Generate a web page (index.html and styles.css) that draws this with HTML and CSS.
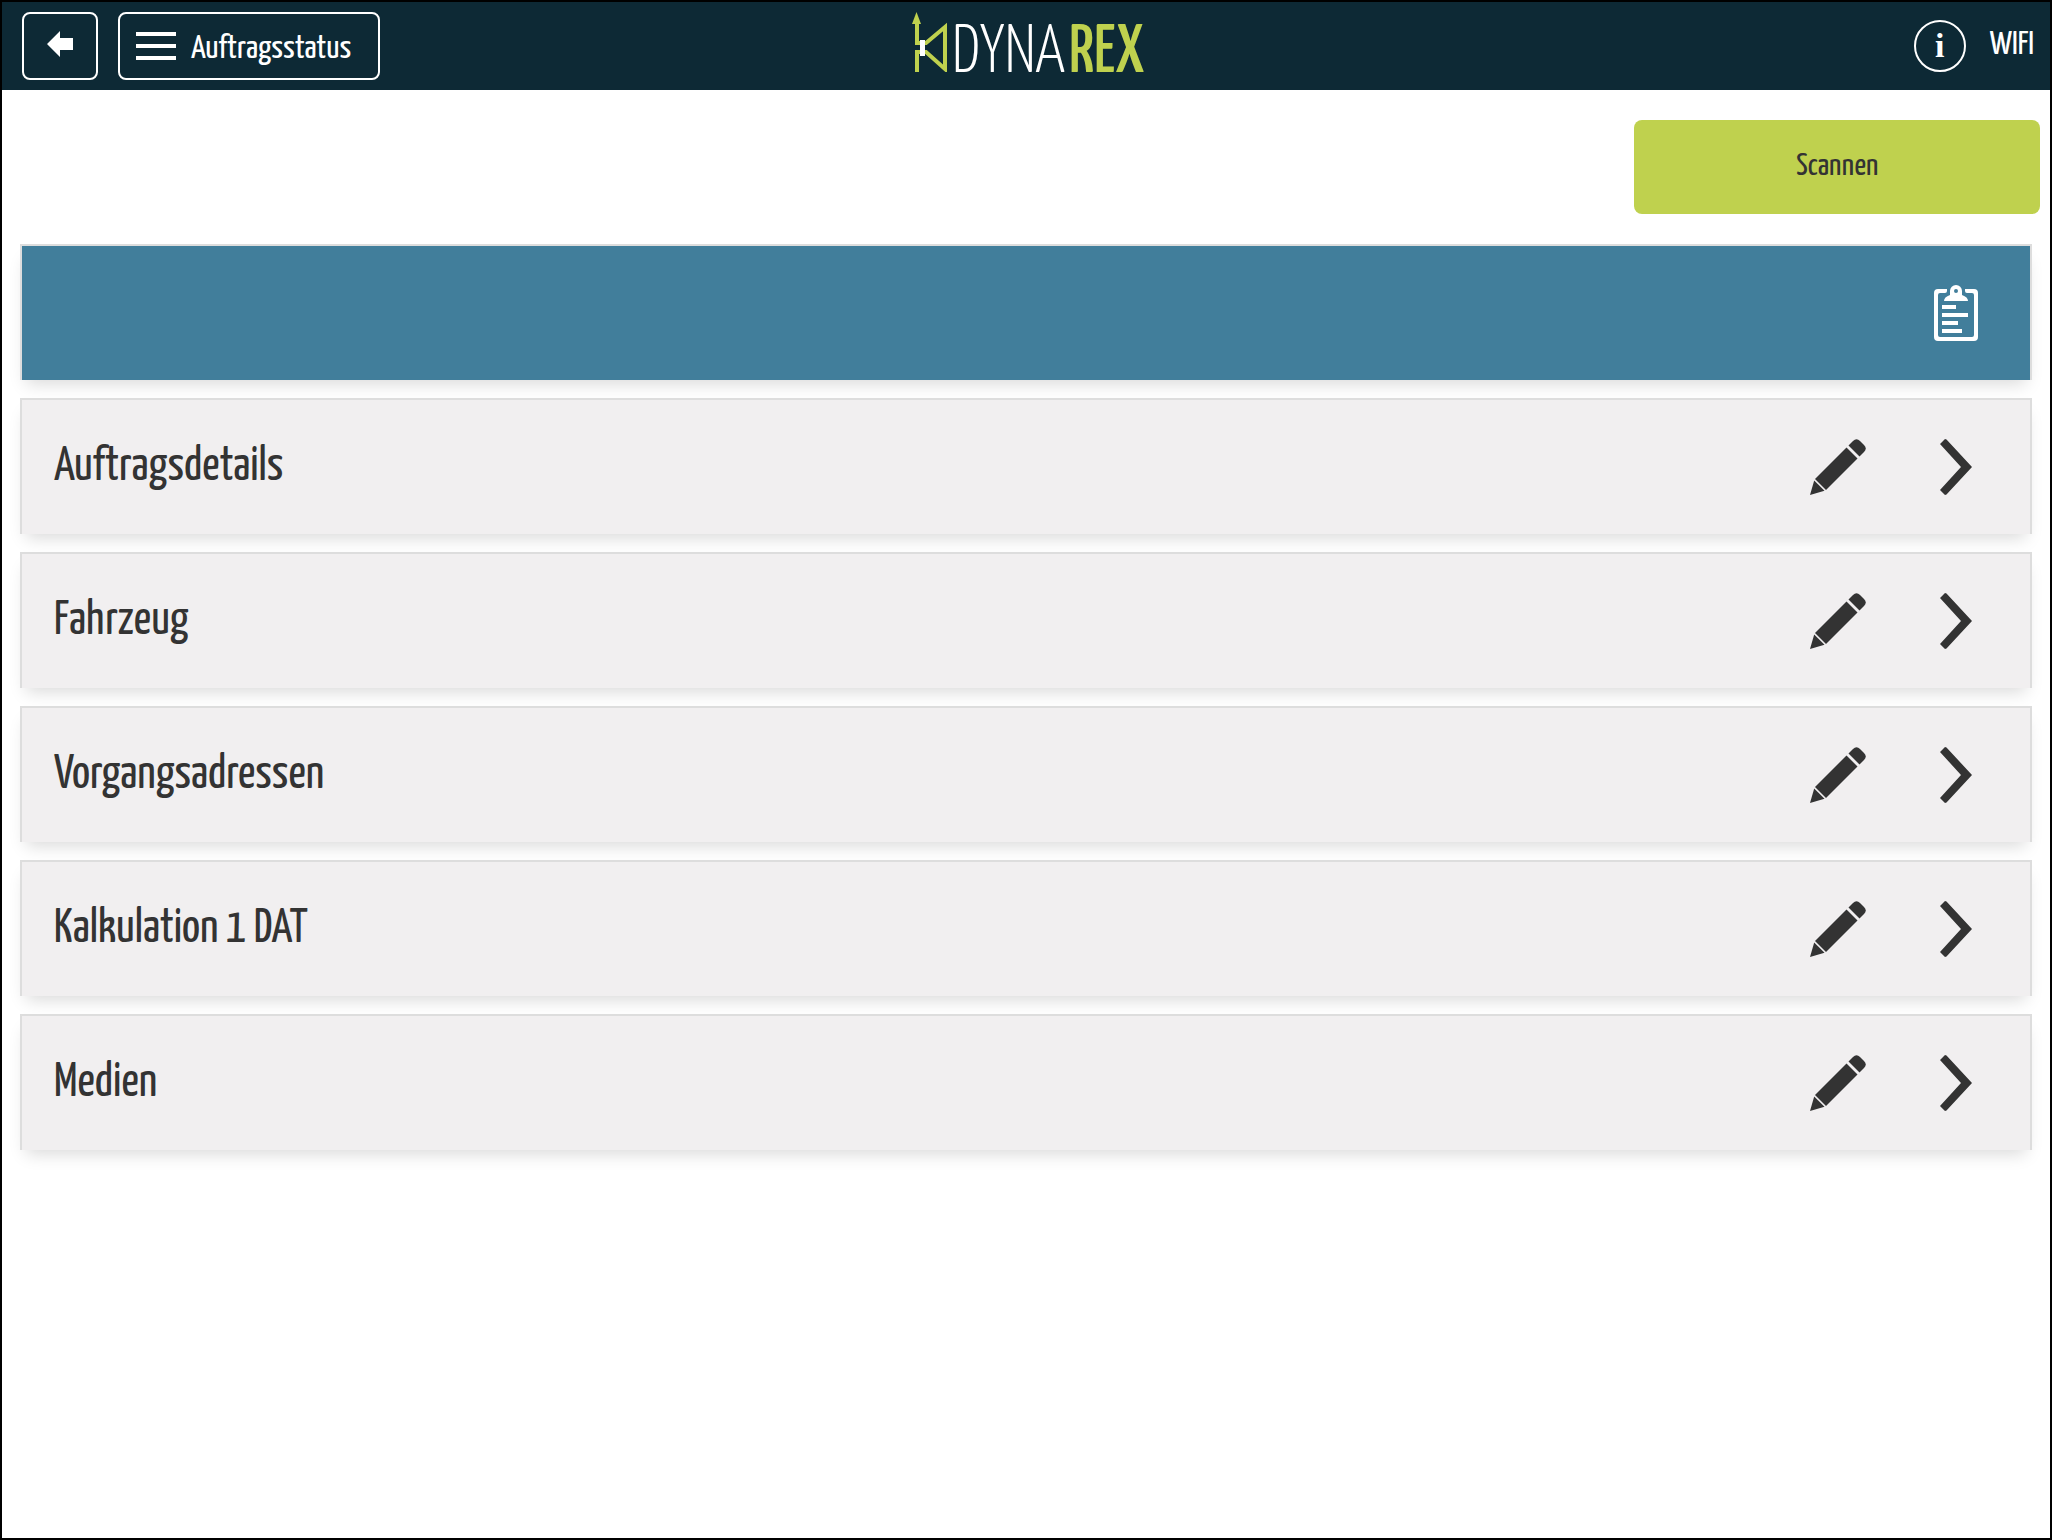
FILE: index.html
```html
<!DOCTYPE html>
<html lang="de">
  <head>
    <meta charset="UTF-8" />
    <meta name="viewport" content="width=device-width, initial-scale=1" />
    <title>Dynarex</title>
    <link rel="stylesheet" href="styles.css">
  </head>
  <body>
    <svg class="sprite" aria-hidden="true">
      <symbol id="pencil" viewBox="0 0 56 56">
        <path d="M38.5 6.5 43 2Q46.500-1.500 50 2L54 6Q57.500 9.500 54 13L49.500 17.500Z" />
        <path d="M36.500 8.500 47.500 19.500 16 51 5 40Z" />
        <path d="M4.200 41.500 14.500 51.800 0 56Z" />
      </symbol>
      <symbol id="chevron" viewBox="0 0 32 56">
        <path d="M5 0 6.500 .5 32 28 6.500 55.500 5 56 0 51 21 28 0 5Z" />
      </symbol>
    </svg>

    <header class="header">
      <div class="header-left">
        <button type="button" class="header-button back-button" aria-label="Zurück">
          <svg width="26" height="26" viewBox="0 0 26 26"><path d="M0 13 13 0V7H26V19H13V26Z" /></svg>
        </button>
        <button type="button" class="header-button menu-button">
          <svg width="40" height="28" viewBox="0 0 40 28"><path d="M0 0H40V4H0ZM0 12H40V16H0ZM0 24H40V28H0Z" /></svg>
          <span>Auftragsstatus</span>
        </button>
      </div>

      <div class="logo">
        <svg width="36" height="60" viewBox="0 0 36 60">
          <path class="logo-line" d="M5 10V31H14L33 15V57L14 40H5V60" />
          <path class="logo-fill" d="M4.500 0 9 12H0Z" />
          <path class="logo-joint" d="M8 28H13V44H8Z" />
        </svg>
        <span class="logo-text">DYNA<b>REX</b></span>
      </div>

      <div class="header-right">
        <button type="button" class="info-button" aria-label="Info">i</button>
        <span class="network">WIFI</span>
      </div>
    </header>

    <main>
      <div class="toolbar">
        <button type="button" class="scan-button">Scannen</button>
      </div>

      <div class="list">
        <div class="row row-active">
          <button type="button" class="icon-button" aria-label="Auftrag">
            <svg width="44" height="56" viewBox="0 0 44 56">
              <path d="M13 4H4Q0 4 0 8V52Q0 56 4 56H40Q44 56 44 52V8Q44 4 40 4H31V6Q31 8 33 8H38Q40 8 40 10V50Q40 52 38 52H6Q4 52 4 50V10Q4 8 6 8H11Q13 8 13 6Z" />
              <path fill-rule="evenodd" d="M10 16Q10 12 16 10V6A6 6 0 0 1 28 6V10Q34 12 34 16ZM22 4A2 2 0 1 0 22 8A2 2 0 1 0 22 4Z" />
              <path d="M8 20H22V24H8ZM8 28H34V32H8ZM8 36H24V40H8ZM8 44H28V48H8Z" />
            </svg>
          </button>
        </div>

        <div class="row">
          <span class="row-title">Auftragsdetails</span>
          <button type="button" class="icon-button" aria-label="Auftragsdetails bearbeiten"><svg width="56" height="56"><use href="#pencil" /></svg></button>
          <button type="button" class="icon-button" aria-label="Auftragsdetails öffnen"><svg width="32" height="56"><use href="#chevron" /></svg></button>
        </div>

        <div class="row">
          <span class="row-title">Fahrzeug</span>
          <button type="button" class="icon-button" aria-label="Fahrzeug bearbeiten"><svg width="56" height="56"><use href="#pencil" /></svg></button>
          <button type="button" class="icon-button" aria-label="Fahrzeug öffnen"><svg width="32" height="56"><use href="#chevron" /></svg></button>
        </div>

        <div class="row">
          <span class="row-title">Vorgangsadressen</span>
          <button type="button" class="icon-button" aria-label="Vorgangsadressen bearbeiten"><svg width="56" height="56"><use href="#pencil" /></svg></button>
          <button type="button" class="icon-button" aria-label="Vorgangsadressen öffnen"><svg width="32" height="56"><use href="#chevron" /></svg></button>
        </div>

        <div class="row">
          <span class="row-title">Kalkulation 1 DAT</span>
          <button type="button" class="icon-button" aria-label="Kalkulation 1 DAT bearbeiten"><svg width="56" height="56"><use href="#pencil" /></svg></button>
          <button type="button" class="icon-button" aria-label="Kalkulation 1 DAT öffnen"><svg width="32" height="56"><use href="#chevron" /></svg></button>
        </div>

        <div class="row">
          <span class="row-title">Medien</span>
          <button type="button" class="icon-button" aria-label="Medien bearbeiten"><svg width="56" height="56"><use href="#pencil" /></svg></button>
          <button type="button" class="icon-button" aria-label="Medien öffnen"><svg width="32" height="56"><use href="#chevron" /></svg></button>
        </div>
      </div>
    </main>
  </body>
</html>
```
FILE: styles.css
```css
* {
  box-sizing: border-box;
}
body {
  margin: 0;
  min-height: 100vh;
  border: 2px solid #000;
  background: #fff;
  color: #333;
  font-family: "Yanone Kaffeesatz", "Liberation Sans Narrow", "Liberation Sans", sans-serif;
}
button {
  padding: 0;
  border: 0;
  background: none;
  color: inherit;
  font-family: inherit;
  cursor: pointer;
}
svg {
  display: block;
  fill: currentColor;
}
.sprite {
  display: none;
}

/* Header */
.header {
  display: grid;
  grid-template-columns: 1fr auto 1fr;
  align-items: center;
  height: 88px;
  padding: 0 16px 0 20px;
  background: #0d2935;
  color: #fff;
}
.header-left {
  display: flex;
  gap: 20px;
}
.header-button {
  display: flex;
  align-items: center;
  height: 68px;
  border: 2px solid #fff;
  border-radius: 8px;
  font-size: 34px;
}
.back-button {
  justify-content: center;
  width: 76px;
  padding-bottom: 4px;
}
.menu-button {
  gap: 15px;
  width: 262px;
  padding: 0 16px;
}
.menu-button span {
  padding-top: 6px;
}
.logo {
  display: flex;
  align-items: flex-start;
  align-self: start;
  gap: 4px;
  padding-top: 10px;
}
.logo-line {
  fill: none;
  stroke: #bfd14e;
  stroke-width: 4;
}
.logo-fill {
  fill: #bfd14e;
}
.logo-joint {
  fill: #fff;
}
.logo-text {
  padding-top: 12px;
  font-size: 68px;
  font-weight: 300;
  line-height: 60px;
}
.logo-text b {
  margin-left: 4px;
  color: #bfd14e;
  font-weight: 500;
}
.header-right {
  display: flex;
  align-items: center;
  justify-content: flex-end;
  gap: 24px;
}
.info-button {
  width: 52px;
  height: 52px;
  border: 2px solid #fff;
  border-radius: 50%;
  font: bold 34px "Liberation Serif", serif;
}
.network {
  padding-bottom: 2px;
  font-size: 34px;
}

/* Content */
.toolbar {
  display: flex;
  justify-content: flex-end;
  padding: 30px 10px;
}
.scan-button {
  width: 20%;
  height: 94px;
  padding-bottom: 2px;
  border-radius: 8px;
  background: #bfd14e;
  font-size: 32px;
}
.list {
  display: flex;
  flex-direction: column;
  gap: 18px;
  padding: 0 18px;
}
.row {
  display: flex;
  align-items: center;
  justify-content: flex-end;
  gap: 22px;
  height: 136px;
  padding: 0 26px 0 32px;
  border: 2px solid #ddd;
  border-bottom: 0;
  background: #f1eff0;
  box-shadow: 0 10px 16px -6px rgba(0, 0, 0, 0.15);
}
.row-active {
  background: #417e9b;
  color: #fff;
}
.row-title {
  flex: 1;
  padding-top: 2px;
  font-size: 48px;
}
.icon-button {
  display: flex;
  align-items: center;
  justify-content: center;
  width: 96px;
  height: 96px;
}
```
